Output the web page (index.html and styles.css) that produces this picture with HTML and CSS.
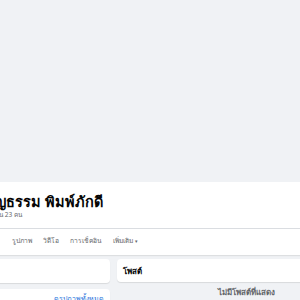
FILE: index.html
```html
<!DOCTYPE html>
<html lang="th">
<head>
  <meta charset="UTF-8" />
  <title>บุญธรรม พิมพ์ภักดี</title>
  <link rel="stylesheet" href="styles.css">
</head>
<body>
  <div class="cover"></div>

  <div class="header">
    <div class="profile">
      <h1 class="name">บุญธรรม พิมพ์ภักดี</h1>
      <p class="friends">เพื่อน 23 คน</p>
    </div>
    <div class="tabs">
      <span class="tab">รูปภาพ</span>
      <span class="tab">วิดีโอ</span>
      <span class="tab">การเช็คอิน</span>
      <span class="tab">เพิ่มเติม <span class="caret">▾</span></span>
    </div>
  </div>

  <div class="main">
    <div class="left">
      <div class="card intro"></div>
      <div class="card photos">
        <a class="see-all" href="#">ดูรูปภาพทั้งหมด</a>
      </div>
    </div>
    <div class="right">
      <div class="card posts-title">โพสต์</div>
      <p class="empty">ไม่มีโพสต์ที่แสดง</p>
    </div>
  </div>
</body>
</html>
```

FILE: styles.css
```css
body {
  margin: 0;
  background: #f0f2f5;
  font-family: "Noto Sans", "Liberation Sans", sans-serif;
  color: #050505;
  overflow: hidden;
}

.cover {
  height: 182px;
  background: #f0f2f5;
}

.header {
  background: #fff;
  height: 73px;
  box-shadow: 0 1px 1px rgba(0, 0, 0, 0.08);
}

.profile {
  height: 46px;
  border-bottom: 1px solid #dadde1;
}

.name {
  margin: 0 0 0 -15px;
  padding-top: 10px;
  font-size: 14.5px;
  font-weight: bold;
  line-height: 18px;
}

.friends {
  margin: 0 0 0 -11px;
  font-size: 6.5px;
  color: #65676b;
}

.tabs {
  display: flex;
  gap: 11px;
  padding: 6px 12px 0;
  font-size: 6.7px;
  color: #65676b;
}

.caret {
  font-size: 5px;
}

.main {
  display: flex;
  gap: 7px;
  padding-top: 4px;
}

.left {
  width: 110px;
  flex-shrink: 0;
}

.card {
  background: #fff;
  border-radius: 4px;
  box-shadow: 0 1px 1px rgba(0, 0, 0, 0.1);
}

.intro {
  height: 24px;
  margin-left: -10px;
}

.photos {
  margin-top: 6px;
  margin-left: -10px;
  height: 40px;
  text-align: right;
  padding: 1px 6px 0 0;
  line-height: 10px;
}

.see-all {
  font-size: 7px;
  color: #216fdb;
  text-decoration: none;
}

.right {
  width: 262px;
  flex-shrink: 0;
}

.posts-title {
  height: 23px;
  padding: 0 6px;
  font-size: 8px;
  font-weight: bold;
  line-height: 23px;
}

.empty {
  margin: 4px 0 0 -3px;
  text-align: center;
  font-size: 8px;
  font-weight: bold;
  color: #65676b;
}
```
